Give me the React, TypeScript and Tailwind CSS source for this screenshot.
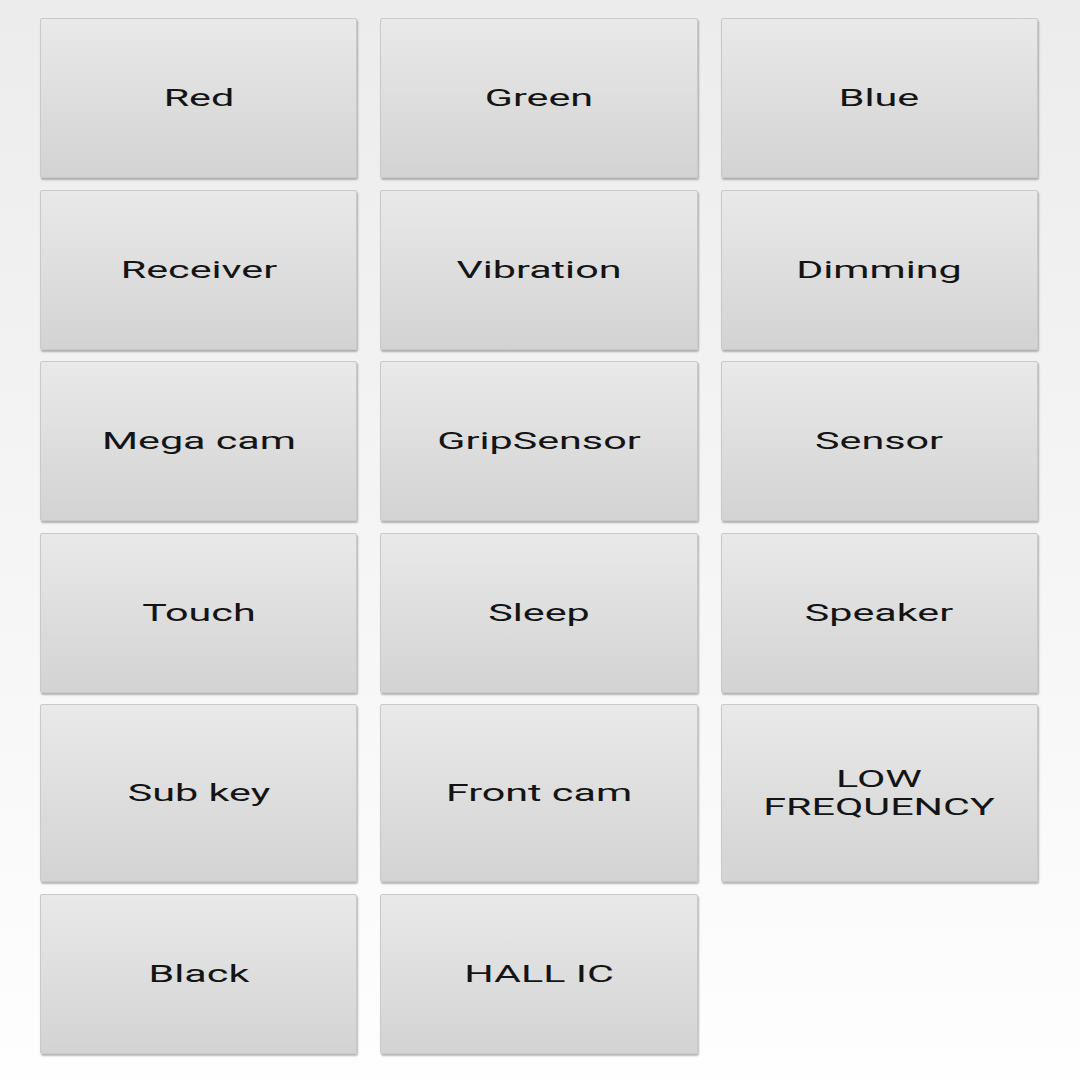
const items: string[] = [
  "Red",
  "Green",
  "Blue",
  "Receiver",
  "Vibration",
  "Dimming",
  "Mega cam",
  "GripSensor",
  "Sensor",
  "Touch",
  "Sleep",
  "Speaker",
  "Sub key",
  "Front cam",
  "LOW FREQUENCY",
  "Black",
  "HALL IC",
];

function TestButton({ label }: { label: string }) {
  return (
    <button className="flex items-center justify-center rounded-[2px] border border-[#c9c9c9] bg-gradient-to-b from-[#e9e9e9] to-[#d3d3d3] shadow-[1px_2px_2px_rgba(0,0,0,0.28)]">
      <span className="block w-[168px] origin-center scale-x-[1.72] text-center text-[24px] leading-[28px] font-normal text-[#141414] [font-family:Roboto,'Liberation_Sans',sans-serif]">
        {label}
      </span>
    </button>
  );
}

export default function App() {
  return (
    <div className="min-h-screen w-full bg-gradient-to-b from-[#ececec] to-[#fefefe] pt-[18px] pl-[40px] pr-[42px]">
      <div className="grid grid-cols-3 grid-rows-[160px_160px_160px_160px_178px_160px] gap-x-[23px] gap-y-[11.5px]">
        {items.map((label) => (
          <TestButton key={label} label={label} />
        ))}
      </div>
    </div>
  );
}
